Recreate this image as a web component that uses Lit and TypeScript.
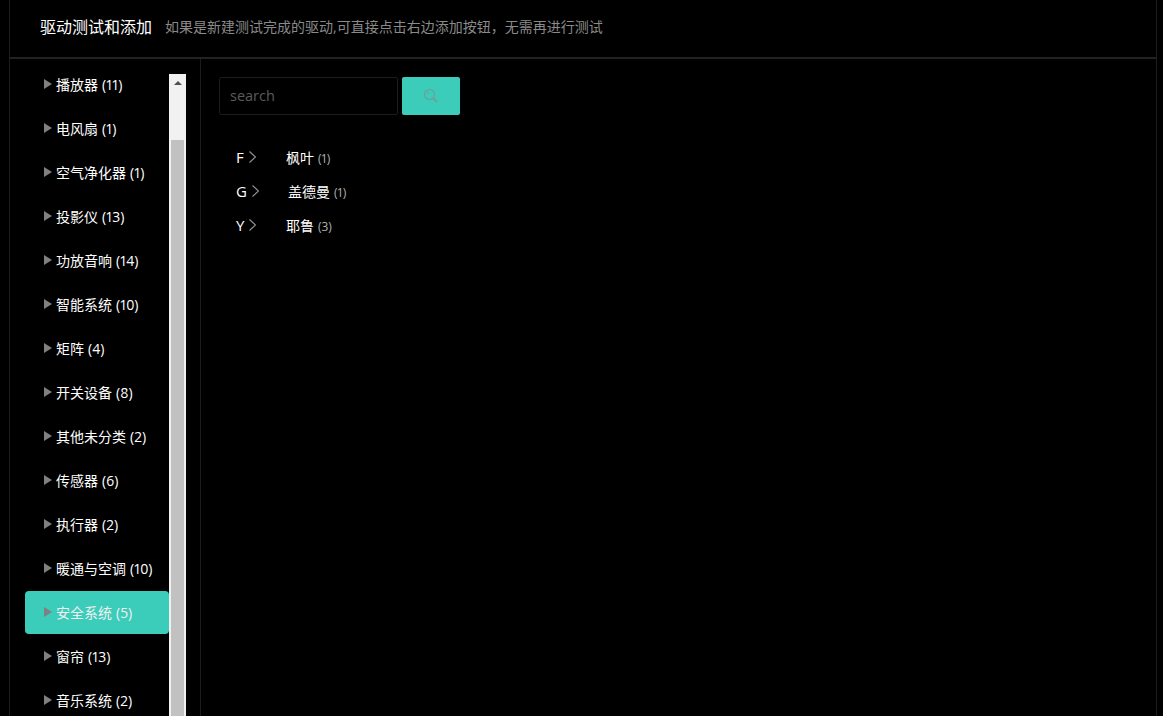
import { LitElement, html, css } from "lit";
import { customElement } from "lit/decorators.js";

const CATS: [string, number][] = [
  ["播放器", 11], ["电风扇", 1], ["空气净化器", 1], ["投影仪", 13], ["功放音响", 14],
  ["智能系统", 10], ["矩阵", 4], ["开关设备", 8], ["其他未分类", 2], ["传感器", 6],
  ["执行器", 2], ["暖通与空调", 10], ["安全系统", 5], ["窗帘", 13], ["音乐系统", 2],
];
const BRANDS: [string, string, number, boolean][] = [
  ["F", "枫叶", 1, false], ["G", "盖德曼", 1, true], ["Y", "耶鲁", 3, false],
];

@customElement("app-root")
export class AppRoot extends LitElement {
  static styles = css`
    :host { display: block; height: 716px; overflow: hidden; background: #000;
      font-family: "Open Sans", "Noto Sans CJK SC", sans-serif; color: #fff;
      font-variant-numeric: proportional-nums; }
    .frame { margin: 0 6px 0 9px; height: 716px; border-left: 1px solid #1c1c1c; border-right: 1px solid #1c1c1c;
      display: flex; flex-direction: column; }
    .head { height: 59px; flex: none; box-sizing: border-box; border-bottom: 2px solid #222; display: flex;
      align-items: center; padding: 0 0 3px 30px; }
    .title { font-size: 16px; line-height: 20px; color: #fff; }
    .sub { font-size: 14px; line-height: 20px; color: #8a8a8a; margin-left: 13px; }
    .body { flex: 1; display: flex; min-height: 0; }
    .side { width: 191px; flex: none; box-sizing: border-box; border-right: 1px solid #1c1c1c; display: flex;
      padding: 4px 0 0 15px; overflow: hidden; }
    .list { width: 144px; flex: none; }
    .item { height: 44px; box-sizing: border-box; display: flex; align-items: center; padding-left: 19px;
      font-size: 14px; line-height: 20px; color: #fff; border-radius: 4px; white-space: nowrap; }
    .item.on { height: 43px; margin-bottom: 1px; background: #3cccba; color: #f0f0f0; }
    .tri { width: 0; height: 0; border-left: 8px solid #808080; border-top: 5.5px solid transparent;
      border-bottom: 5.5px solid transparent; margin-right: 4px; transform: translateY(-1px); }
    .num { margin-left: 4px; }
    .bar { width: 17px; flex: none; margin-top: 11px; background: #f1f1f1;
      display: flex; flex-direction: column; align-items: center; }
    .up { height: 17px; flex: none; display: flex; align-items: center; justify-content: center; }
    .thumb { width: 13px; margin-top: 49px; height: 600px; background: #c1c1c1; }
    .main { flex: 1; padding: 18px 0 0 18px; }
    .search { display: flex; gap: 4px; }
    .input { width: 179px; height: 38px; box-sizing: border-box; border: 1px solid #1c1c1c; border-radius: 2px;
      padding: 0 0 2px 10px; display: flex; align-items: center; font-size: 14.5px; color: #5c5c5c; }
    .btn { width: 58px; height: 38px; background: #3cccba; border-radius: 2px; display: flex; align-items: center;
      justify-content: center; }
    .brands { margin-top: 26px; padding-left: 17px; }
    .brand { height: 34px; display: flex; align-items: center; font-size: 14px; }
    .letter { width: 50px; box-sizing: border-box; padding-bottom: 2px; display: flex; align-items: center; gap: 5px; flex: none; font-size: 15px; }
    .brand.wide .name { margin-left: 2px; }
    .name { font-size: 14px; line-height: 20px; color: #fff; }
    .count { font-size: 12px; color: #b0b0b0; margin-left: 4px; }
  `;

  render() {
    return html`<div class="frame">
      <div class="head">
        <span class="title">驱动测试和添加</span>
        <span class="sub">如果是新建测试完成的驱动,可直接点击右边添加按钮，无需再进行测试</span>
      </div>
      <div class="body">
        <div class="side">
          <div class="list">
            ${CATS.map(([n, c]) => html`<div class="item ${n === "安全系统" ? "on" : ""}">
              <span class="tri"></span><span>${n}</span><span class="num">(${c})</span>
            </div>`)}
          </div>
          <div class="bar">
            <div class="up"><svg width="8" height="4" viewBox="0 0 8 4"><path d="M4 0L8 4H0z" fill="#505050"/></svg></div>
            <div class="thumb"></div>
          </div>
        </div>
        <div class="main">
          <div class="search">
            <div class="input">search</div>
            <div class="btn">
              <svg width="14" height="14" viewBox="0 0 14 14" fill="none" stroke="#6f9f9a">
                <circle cx="5.5" cy="5.5" r="5" stroke-width="1.2"/>
                <path d="M3 5.5A2.5 2.5 0 0 1 5.5 3" stroke-width="0.8"/>
                <path d="M9.5 9.5L13 13" stroke-width="2"/>
              </svg>
            </div>
          </div>
          <div class="brands">
            ${BRANDS.map(([l, n, c, w]) => html`<div class="brand ${w ? "wide" : ""}">
              <span class="letter">${l}
                <svg width="7" height="12" viewBox="0 0 7 12" fill="none" stroke="#909090" stroke-width="1.2"><path d="M.5 .5L6.5 6L.5 11.5"/></svg>
              </span>
              <span class="name">${n}</span><span class="count">(${c})</span>
            </div>`)}
          </div>
        </div>
      </div>
    </div>`;
  }
}
